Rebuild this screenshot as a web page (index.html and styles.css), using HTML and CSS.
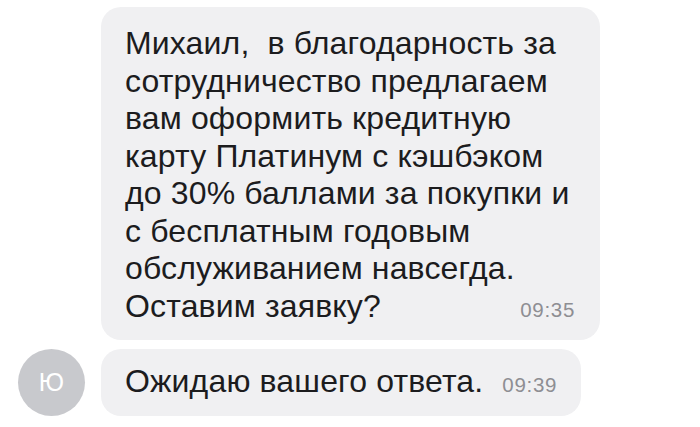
FILE: index.html
```html
<!DOCTYPE html>
<html lang="ru">
<head>
<meta charset="utf-8">
<title>Чат</title>
<link rel="stylesheet" href="styles.css">
</head>
<body>
<div class="chat">
  <div class="msg">
    <div class="avatar-slot"></div>
    <div class="bubble bubble-wide">
      <p class="text">Михаил,&nbsp; в благодарность за<br>сотрудничество предлагаем<br>вам оформить кредитную<br>карту Платинум с кэшбэком<br>до 30% баллами за покупки и<br>с бесплатным годовым<br>обслуживанием навсегда.</p>
      <div class="last"><span class="text">Оставим заявку?</span><span class="time">09:35</span></div>
    </div>
  </div>
  <div class="msg">
    <div class="avatar-slot"><div class="avatar">Ю</div></div>
    <div class="bubble bubble-short">
      <div class="last"><span class="text">Ожидаю вашего ответа.</span><span class="time">09:39</span></div>
    </div>
  </div>
</div>
</body>
</html>
```

FILE: styles.css
```css
html, body {
  margin: 0;
  padding: 0;
  background: #ffffff;
}
body {
  font-family: "Liberation Sans", Arial, sans-serif;
  color: #1c1c1e;
  width: 700px;
  height: 427px;
  overflow: hidden;
}
.chat {
  display: flex;
  flex-direction: column;
  gap: 9px;
  padding: 7px 0 0 18px;
}
.msg {
  display: flex;
  align-items: center;
  gap: 16px;
}
.avatar-slot {
  width: 67px;
  flex: none;
}
.avatar {
  width: 67px;
  height: 67px;
  border-radius: 50%;
  background: #c8c9cd;
  color: #ffffff;
  font-size: 25px;
  display: flex;
  align-items: center;
  justify-content: center;
}
.bubble {
  background: #f0f0f2;
  border-radius: 20px;
  box-sizing: border-box;
}
.bubble-wide {
  width: 499px;
  padding: 18px 25px 15px 24px;
}
.bubble-short {
  padding: 14px 24px 15px 24px;
}
.text {
  margin: 0;
  font-size: 32px;
  line-height: 37.5px;
  letter-spacing: 0.15px;
  white-space: nowrap;
}
.last {
  display: flex;
  align-items: baseline;
  justify-content: space-between;
  gap: 19px;
}
.time {
  font-size: 20.5px;
  letter-spacing: 0.7px;
  color: #8e8e93;
}
```
